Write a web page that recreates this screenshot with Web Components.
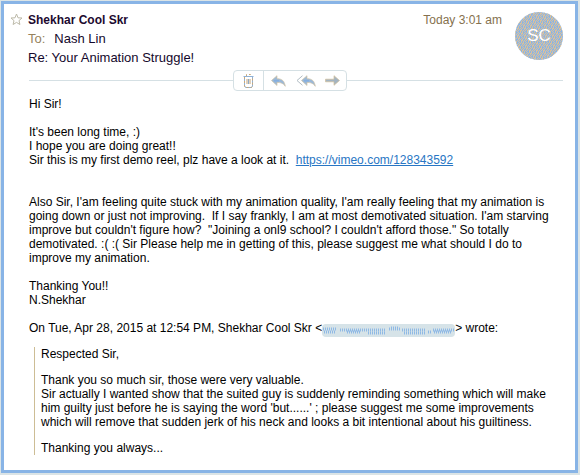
<!DOCTYPE html>
<html lang="en">
<head>
<meta charset="utf-8">
<title>Re: Your Animation Struggle!</title>
<style>
*{box-sizing:border-box}
html{min-height:100%;display:flex;flex-direction:column;background:#dbe4e6}
body{margin:0;flex:1;display:flex;padding:1px 2px 2px 1px;font:12px/14px "Liberation Sans",Arial,sans-serif;color:#000}
mail-message{flex:1}
</style>
</head>
<body>
<mail-message>
  <mail-header slot="header" sender="Shekhar Cool Skr" recipient="Nash Lin" time="Today 3:01 am" initials="SC">Re: Your Animation Struggle!</mail-header>
  <mail-actions slot="actions"></mail-actions>
  <mail-text>Hi Sir!</mail-text>
  <mail-text>It's been long time, :)
I hope you are doing great!!
Sir this is my first demo reel, plz have a look at it.  <mail-link href="https://vimeo.com/128343592"></mail-link></mail-text>
  <mail-text class="spaced">Also Sir, I'am feeling quite stuck with my animation quality, I'am really feeling that my animation is
going down or just not improving.  If I say frankly, I am at most demotivated situation. I'am starving
improve but couldn't figure how?  "Joining a onl9 school? I couldn't afford those." So totally
demotivated. :( :( Sir Please help me in getting of this, please suggest me what should I do to
improve my animation.</mail-text>
  <mail-text>Thanking You!!
N.Shekhar</mail-text>
  <mail-text>On Tue, Apr 28, 2015 at 12:54 PM, Shekhar Cool Skr &lt;<masked-address></masked-address>&gt; wrote:</mail-text>
  <mail-quote>
    <p>Respected Sir,</p>
    <p>Thank you so much sir, those were very valuable.<br>Sir actually I wanted show that the suited guy is suddenly reminding something which will make<br>him guilty just before he is saying the word 'but......' ; please suggest me some improvements<br>which will remove that sudden jerk of his neck and looks a bit intentional about his guiltiness.</p>
    <p>Thanking you always...</p>
  </mail-quote>
</mail-message>

<script>
function define(name, html, setup) {
  const t = document.createElement('template');
  t.innerHTML = html;
  customElements.define(name, class extends HTMLElement {
    constructor() {
      super();
      this.attachShadow({mode: 'open'}).append(t.content.cloneNode(true));
    }
    connectedCallback() { if (setup) setup(this, this.shadowRoot); }
  });
}

define('mail-message', `<style>
:host{display:block;box-sizing:border-box;background:#fff;border:3px solid #88b4e6;padding:8px 12px 12px 6px}
.actions{margin:3px 0 6px 19px}
.body{margin-left:19px}
</style>
<slot name="header"></slot><div class="actions"><slot name="actions"></slot></div><main class="body"><slot></slot></main>`);

define('mail-header', `<style>
:host{display:flex;gap:13px;align-items:flex-start}
button{all:unset;width:13px;height:14px;flex:none;cursor:pointer}
svg{display:block}
.star{display:flex;gap:5px;flex:1}
.text{flex:1;color:#14082c}
h1,p{margin:0}
h1{font-size:12px;line-height:17px;color:#1c0a30}
p{font-size:13px;line-height:19px}
.to{color:#96825c;margin-right:9px}
time{font-size:12px;line-height:17px;color:#85714e}
.avatar{width:48px;height:48px;flex:none;display:grid}
.avatar>*{grid-area:1/1}
.avatar svg{border-radius:50%;background:#8ab4e6}
.avatar span{place-self:center;color:#fff;font-size:17px;line-height:20px}
</style>
<div class="star"><button aria-label="Flag message"><svg width="13" height="13" viewBox="0 0 13 13" fill="none" stroke="#bcb9a8"><path d="M6.500 1 8 4.800l4 .2-3 2.600.9 3.900-3.400-2.100-3.400 2.100L4 7.600 1 5l4-.2z"/></svg></button>
<div class="text"><h1></h1><p><span class="to">To:</span><span class="rcpt"></span></p><p><slot></slot></p></div></div>
<time></time>
<div class="avatar"><svg width="48" height="48" viewBox="0 0 48 48"><path class="weave" fill="#dcc198" shape-rendering="crispEdges"/></svg><span></span></div>`, (el, r) => {
  r.querySelector('h1').textContent = el.getAttribute('sender');
  r.querySelector('.rcpt').textContent = el.getAttribute('recipient');
  r.querySelector('time').textContent = el.getAttribute('time');
  r.querySelector('.avatar span').textContent = el.getAttribute('initials');
  // Two-colour dither whose phase shifts every few cells.
  let cells = '';
  for (let y = 0; y < 48; y++)
    for (let x = 0; x < 48; x++)
      if ((x + y + Math.floor((x + 2 * y) / 7) + Math.floor(y / 5)) % 2) cells += `M${x} ${y}h1v1h-1z`;
  r.querySelector('.weave').setAttribute('d', cells);
});

define('mail-actions', `<style>
:host{display:flex;align-items:center}
:host::before,:host::after{content:"";height:1px;background:#d5e0e4;flex:17}
:host::after{flex:18}
.bar{display:flex;height:21px;box-sizing:border-box;border:1px solid #d5e0e4;border-radius:4px}
button{all:unset;display:grid;place-items:center;width:27px;cursor:pointer}
button:first-child{width:29px;border-right:1px solid #d5e0e4}
button:nth-child(2){width:28px}
svg{display:block}
</style>
<div class="bar" role="toolbar" aria-label="Message actions">
<button aria-label="Delete"><svg width="11" height="14" viewBox="0 0 11 14" fill="none"><path stroke="#8fb1d6" d="M1.500 3v9l1 1.500h6l1-1.500V3M.5 2.500h10"/><path stroke="#c9a878" d="M3.500 2V.5h4V2M1.500 3v9l1 1.500h6l1-1.500V3" stroke-dasharray="2 2"/><path stroke="#c2a276" d="M4 5v5M7 5v5"/><path stroke="#8fa9c4" d="M5.500 5v5"/></svg></button>
<button aria-label="Reply"><svg width="15" height="12" viewBox="0 0 15 12"><path fill="#9ab8d8" stroke="#d3c3a4" stroke-width=".7" d="M.5 5.500 6 .7v3C11 3.700 13.500 6 14.300 11.300 12 8 9.500 7.500 6 7.500v3z"/><path fill="#84aee0" d="M3 5h5v1.500H3z"/></svg></button>
<button aria-label="Reply all"><svg width="20" height="12" viewBox="0 0 20 12"><path fill="#9ab8d8" stroke="#d3c3a4" stroke-width=".7" d="M5.500 5.500 11 .7v3C16 3.700 18.500 6 19.300 11.300 17 8 14.500 7.500 11 7.500v3z"/><path fill="#84aee0" d="M8 5h5v1.500H8z"/><path fill="none" stroke="#b2bdc4" d="M6.500.7 1 5.500l5.500 4.800"/></svg></button>
<button aria-label="Forward"><svg width="15" height="12" viewBox="0 0 15 12"><path fill="#a3b4c2" stroke="#d3bf98" stroke-width=".7" d="M14.500 5.500 9 .7v3.500H.5v2.600H9v3.500z"/></svg></button>
</div>`);

define('mail-text', `<style>
:host{display:block;white-space:pre-wrap;margin-bottom:14px}
:host(.spaced){margin-top:28px}
</style><slot></slot>`);

define('mail-link', `<style>:host{display:inline}a{color:#2876c4}</style><a></a>`, (el, r) => {
  const a = r.querySelector('a');
  a.href = a.textContent = el.getAttribute('href');
});

define('masked-address', `<style>
:host{display:inline-block;width:133px;height:13px;margin:-1px 0;vertical-align:-4px;border-radius:4px;background:#d6e3e8;overflow:hidden}
svg{display:block}
</style><svg width="133" height="13" viewBox="0 0 133 13" fill="none" stroke="#8fb9e5"><path stroke-width="3" stroke-dasharray="1 1" d="M1 5h14M18 6h46M67 5h12M80 6h24M111 6h21"/><path stroke-width="3" stroke-dasharray="1 1" d="M2 8h12M25 8h14M46 9h18M69 4h8M82 9h22M106 8h3M112 8h18"/></svg>`);

define('mail-quote', `<style>
:host{display:block;margin:-3px 0 0 5px;padding-left:6px;border-left:1px solid #cdbd95}
::slotted(p){margin:0 0 12px}
::slotted(p:last-child){margin:0}
</style><slot></slot>`);
</script>
</body>
</html>
